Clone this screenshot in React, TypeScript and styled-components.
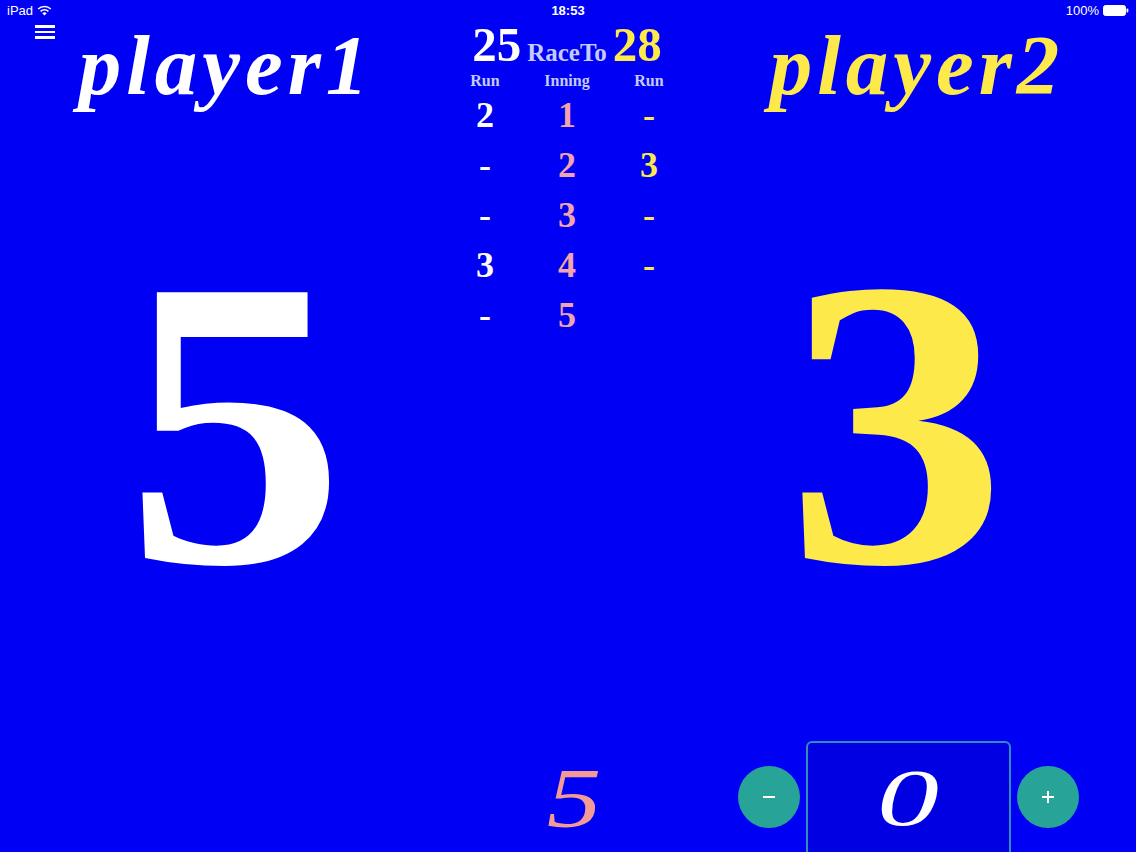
import React from 'react'
import styled, { createGlobalStyle } from 'styled-components'

const GlobalStyle = createGlobalStyle`
  html, body {
    margin: 0;
    padding: 0;
    background: #0000f5;
  }
  * { box-sizing: border-box; }
`

const serif = `"Liberation Serif", "DejaVu Serif", serif`
const sans = `"Liberation Sans", Arial, sans-serif`

const colors = {
  white: '#ffffff',
  yellow: '#fde94a',
  pink: '#f2a3ab',
  salmon: '#f39a95',
  lavender: '#c3cbff',
  teal: '#28a397',
}

type Tone = keyof typeof colors

const innings = [
  { p1: '2', p2: '-' },
  { p1: '-', p2: '3' },
  { p1: '-', p2: '-' },
  { p1: '3', p2: '-' },
  { p1: '-', p2: '' },
]

function Wifi() {
  return (
    <svg width="15" height="11" viewBox="0 0 15 11">
      <path d="M7.5 10.5 L5.3 8.2 A3.2 3.2 0 0 1 9.7 8.2 Z" fill="#fff" />
      <path d="M3.6 6.4 A5.6 5.6 0 0 1 11.4 6.4" stroke="#fff" strokeWidth="1.6" fill="none" />
      <path d="M1.2 4 A9 9 0 0 1 13.8 4" stroke="#fff" strokeWidth="1.6" fill="none" />
    </svg>
  )
}

function Battery() {
  return (
    <svg width="26" height="11" viewBox="0 0 26 11">
      <rect x="0.5" y="0.5" width="22" height="10" rx="2" fill="#fff" stroke="#fff" />
      <rect x="23.5" y="3.5" width="1.8" height="4" rx="0.8" fill="#fff" />
    </svg>
  )
}

function App() {
  return (
    <>
      <GlobalStyle />
      <Screen>
        <StatusBar>
          <StatusSide>
            iPad <Wifi />
          </StatusSide>
          <Clock>18:53</Clock>
          <StatusSide $right>
            100% <Battery />
          </StatusSide>
        </StatusBar>

        <MenuButton aria-label="menu">
          <span />
          <span />
          <span />
        </MenuButton>

        <Board>
          <PlayerColumn>
            <PlayerName $tone="white">player1</PlayerName>
            <BigScore $tone="white" $shift={13}>5</BigScore>
          </PlayerColumn>

          <Middle>
            <RaceHeader>
              <RunTotal $tone="white">25</RunTotal>
              <RaceTo>RaceTo</RaceTo>
              <RunTotal $tone="yellow">28</RunTotal>
            </RaceHeader>
            <Table>
              <Label>Run</Label>
              <Label>Inning</Label>
              <Label>Run</Label>
              {innings.map((row, i) => (
                <React.Fragment key={i}>
                  <Cell $tone="white">{row.p1}</Cell>
                  <Cell $tone="pink">{i + 1}</Cell>
                  <Cell $tone="yellow">{row.p2}</Cell>
                </React.Fragment>
              ))}
            </Table>
          </Middle>

          <PlayerColumn>
            <PlayerName $tone="yellow">player2</PlayerName>
            <BigScore $tone="yellow" $shift={-17}>3</BigScore>
          </PlayerColumn>

          <FooterCell />
          <FooterCell>
            <InningNow>5</InningNow>
          </FooterCell>
          <FooterCell>
            <Stepper>
              <RoundButton aria-label="minus">
                <svg width="16" height="16" viewBox="0 0 16 16">
                  <path d="M2 8 H14" stroke="#fff" strokeWidth="2" />
                </svg>
              </RoundButton>
              <RunBox>
                <RunValue>0</RunValue>
              </RunBox>
              <RoundButton aria-label="plus">
                <svg width="16" height="16" viewBox="0 0 16 16">
                  <path d="M2 8 H14 M8 2 V14" stroke="#fff" strokeWidth="2" />
                </svg>
              </RoundButton>
            </Stepper>
          </FooterCell>
        </Board>
      </Screen>
    </>
  )
}

export default App

const Screen = styled.div`
  position: relative;
  width: 1136px;
  height: 852px;
  overflow: hidden;
  background: #0000f5;
  display: flex;
  flex-direction: column;
`

const StatusBar = styled.div`
  height: 20px;
  display: grid;
  grid-template-columns: 1fr auto 1fr;
  align-items: center;
  padding: 0 7px;
  color: #fff;
  font-family: ${sans};
  font-size: 13px;
`

const StatusSide = styled.div<{ $right?: boolean }>`
  display: flex;
  align-items: center;
  gap: 4px;
  justify-content: ${p => (p.$right ? 'flex-end' : 'flex-start')};
`

const Clock = styled.div`
  font-weight: 600;
`

const MenuButton = styled.div`
  position: absolute;
  top: 25px;
  left: 35px;
  width: 20px;
  display: flex;
  flex-direction: column;
  gap: 3px;
  span {
    display: block;
    height: 2.5px;
    background: #fff;
  }
`

const Board = styled.div`
  flex: 1;
  display: grid;
  grid-template-columns: 444px 246px 1fr;
  grid-template-rows: 1fr 111px;
`

const PlayerColumn = styled.div`
  display: flex;
  flex-direction: column;
  align-items: center;
`

const PlayerName = styled.div<{ $tone: Tone }>`
  font-family: ${serif};
  font-style: italic;
  font-weight: 700;
  font-size: 85px;
  line-height: 86px;
  letter-spacing: 5px;
  margin-top: 2px;
  margin-left: 8px;
  color: ${p => colors[p.$tone]};
`

const BigScore = styled.div<{ $tone: Tone; $shift: number }>`
  flex: 1;
  display: flex;
  align-items: center;
  justify-content: center;
  font-family: ${serif};
  font-weight: 700;
  font-size: 412px;
  line-height: 1;
  padding-bottom: 4px;
  transform: translateX(${p => p.$shift}px) scaleX(1.07);
  color: ${p => colors[p.$tone]};
`

const Middle = styled.div`
  display: flex;
  flex-direction: column;
  align-items: center;
`

const RaceHeader = styled.div`
  display: flex;
  align-items: baseline;
  gap: 6px;
  height: 50px;
  line-height: 50px;
`

const RunTotal = styled.span<{ $tone: Tone }>`
  font-family: ${serif};
  font-weight: 700;
  font-size: 49px;
  color: ${p => colors[p.$tone]};
`

const RaceTo = styled.span`
  font-family: ${serif};
  font-weight: 700;
  font-size: 25px;
  color: ${colors.lavender};
`

const Table = styled.div`
  width: 246px;
  margin-top: 2px;
  display: grid;
  grid-template-columns: repeat(3, 1fr);
  grid-template-rows: 18px;
  grid-auto-rows: 50px;
  justify-items: center;
`

const Label = styled.div`
  font-family: ${serif};
  font-weight: 700;
  font-size: 16px;
  line-height: 18px;
  color: ${colors.lavender};
`

const Cell = styled.div<{ $tone: Tone }>`
  font-family: ${serif};
  font-weight: 700;
  font-size: 36px;
  line-height: 50px;
  color: ${p => colors[p.$tone]};
`

const FooterCell = styled.div`
  display: flex;
  justify-content: center;
  align-items: flex-start;
`

const InningNow = styled.div`
  font-family: ${serif};
  font-style: italic;
  font-weight: 400;
  font-size: 84px;
  line-height: 116px;
  margin-left: 14px;
  transform: scaleX(1.3);
  color: ${colors.salmon};
`

const Stepper = styled.div`
  display: flex;
  align-items: flex-start;
  gap: 6px;
  margin-right: 10px;
`

const RoundButton = styled.div`
  width: 62px;
  height: 62px;
  margin-top: 25px;
  border-radius: 50%;
  background: ${colors.teal};
  display: flex;
  align-items: center;
  justify-content: center;
`

const RunBox = styled.div`
  width: 205px;
  height: 130px;
  border: 2px solid #2f8fb8;
  border-radius: 6px;
  background: #0000e2;
  display: flex;
  justify-content: center;
`

const RunValue = styled.div`
  font-family: ${serif};
  font-style: italic;
  font-weight: 400;
  font-size: 80px;
  line-height: 110px;
  transform: scaleX(1.55);
  color: #fff;
`
